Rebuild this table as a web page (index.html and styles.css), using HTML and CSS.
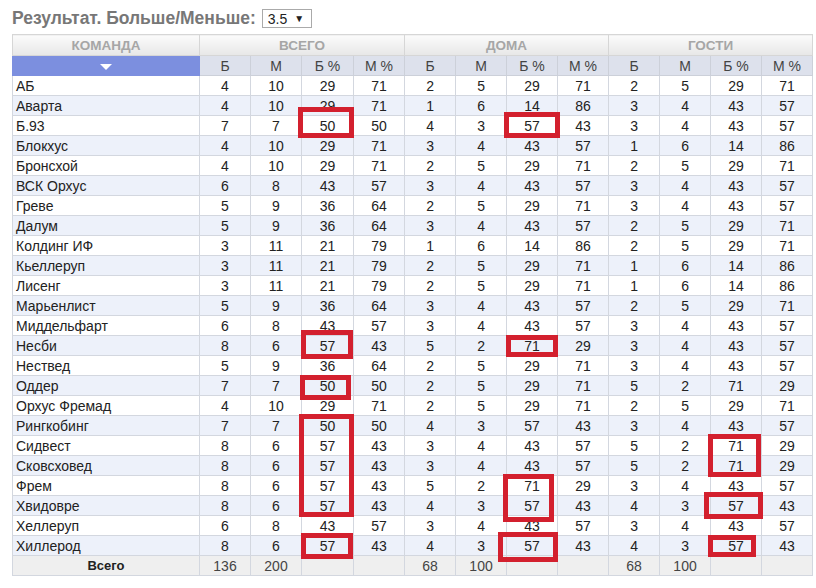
FILE: index.html
```html
<!DOCTYPE html>
<html lang="ru">
<head>
<meta charset="utf-8">
<title>Результат. Больше/Меньше</title>
<link rel="stylesheet" href="styles.css">
</head>
<body>
<div class="page">
  <div class="titlebar">
    <h1 class="title">Результат. Больше/Меньше:</h1>
    <div class="select"><span>3.5</span><span class="arrow">▼</span></div>
  </div>
  <table class="stats">
    <colgroup>
      <col class="c-team">
      <col class="c"><col class="c"><col class="c52"><col class="c">
      <col class="c"><col class="c"><col class="c"><col class="c">
      <col class="c"><col class="c"><col class="c"><col class="c">
    </colgroup>
    <thead>
      <tr class="h1">
        <th>КОМАНДА</th>
        <th colspan="4">ВСЕГО</th>
        <th colspan="4">ДОМА</th>
        <th colspan="4">ГОСТИ</th>
      </tr>
      <tr class="h2">
        <th class="sort"><span class="tri"></span></th>
        <th>Б</th><th>М</th><th>Б %</th><th>М %</th>
        <th>Б</th><th>М</th><th>Б %</th><th>М %</th>
        <th>Б</th><th>М</th><th>Б %</th><th>М %</th>
      </tr>
    </thead>
    <tbody>
      <tr><td>АБ</td><td>4</td><td>10</td><td>29</td><td>71</td><td>2</td><td>5</td><td>29</td><td>71</td><td>2</td><td>5</td><td>29</td><td>71</td></tr>
      <tr><td>Аварта</td><td>4</td><td>10</td><td>29</td><td>71</td><td>1</td><td>6</td><td>14</td><td>86</td><td>3</td><td>4</td><td>43</td><td>57</td></tr>
      <tr><td>Б.93</td><td>7</td><td>7</td><td>50</td><td>50</td><td>4</td><td>3</td><td>57</td><td>43</td><td>3</td><td>4</td><td>43</td><td>57</td></tr>
      <tr><td>Блокхус</td><td>4</td><td>10</td><td>29</td><td>71</td><td>3</td><td>4</td><td>43</td><td>57</td><td>1</td><td>6</td><td>14</td><td>86</td></tr>
      <tr><td>Бронсхой</td><td>4</td><td>10</td><td>29</td><td>71</td><td>2</td><td>5</td><td>29</td><td>71</td><td>2</td><td>5</td><td>29</td><td>71</td></tr>
      <tr><td>ВСК Орхус</td><td>6</td><td>8</td><td>43</td><td>57</td><td>3</td><td>4</td><td>43</td><td>57</td><td>3</td><td>4</td><td>43</td><td>57</td></tr>
      <tr><td>Греве</td><td>5</td><td>9</td><td>36</td><td>64</td><td>2</td><td>5</td><td>29</td><td>71</td><td>3</td><td>4</td><td>43</td><td>57</td></tr>
      <tr><td>Далум</td><td>5</td><td>9</td><td>36</td><td>64</td><td>3</td><td>4</td><td>43</td><td>57</td><td>2</td><td>5</td><td>29</td><td>71</td></tr>
      <tr><td>Колдинг ИФ</td><td>3</td><td>11</td><td>21</td><td>79</td><td>1</td><td>6</td><td>14</td><td>86</td><td>2</td><td>5</td><td>29</td><td>71</td></tr>
      <tr><td>Кьеллеруп</td><td>3</td><td>11</td><td>21</td><td>79</td><td>2</td><td>5</td><td>29</td><td>71</td><td>1</td><td>6</td><td>14</td><td>86</td></tr>
      <tr><td>Лисенг</td><td>3</td><td>11</td><td>21</td><td>79</td><td>2</td><td>5</td><td>29</td><td>71</td><td>1</td><td>6</td><td>14</td><td>86</td></tr>
      <tr><td>Марьенлист</td><td>5</td><td>9</td><td>36</td><td>64</td><td>3</td><td>4</td><td>43</td><td>57</td><td>2</td><td>5</td><td>29</td><td>71</td></tr>
      <tr><td>Миддельфарт</td><td>6</td><td>8</td><td>43</td><td>57</td><td>3</td><td>4</td><td>43</td><td>57</td><td>3</td><td>4</td><td>43</td><td>57</td></tr>
      <tr><td>Несби</td><td>8</td><td>6</td><td>57</td><td>43</td><td>5</td><td>2</td><td>71</td><td>29</td><td>3</td><td>4</td><td>43</td><td>57</td></tr>
      <tr><td>Нествед</td><td>5</td><td>9</td><td>36</td><td>64</td><td>2</td><td>5</td><td>29</td><td>71</td><td>3</td><td>4</td><td>43</td><td>57</td></tr>
      <tr><td>Оддер</td><td>7</td><td>7</td><td>50</td><td>50</td><td>2</td><td>5</td><td>29</td><td>71</td><td>5</td><td>2</td><td>71</td><td>29</td></tr>
      <tr><td>Орхус Фремад</td><td>4</td><td>10</td><td>29</td><td>71</td><td>2</td><td>5</td><td>29</td><td>71</td><td>2</td><td>5</td><td>29</td><td>71</td></tr>
      <tr><td>Рингкобинг</td><td>7</td><td>7</td><td>50</td><td>50</td><td>4</td><td>3</td><td>57</td><td>43</td><td>3</td><td>4</td><td>43</td><td>57</td></tr>
      <tr><td>Сидвест</td><td>8</td><td>6</td><td>57</td><td>43</td><td>3</td><td>4</td><td>43</td><td>57</td><td>5</td><td>2</td><td>71</td><td>29</td></tr>
      <tr><td>Сковсховед</td><td>8</td><td>6</td><td>57</td><td>43</td><td>3</td><td>4</td><td>43</td><td>57</td><td>5</td><td>2</td><td>71</td><td>29</td></tr>
      <tr><td>Фрем</td><td>8</td><td>6</td><td>57</td><td>43</td><td>5</td><td>2</td><td>71</td><td>29</td><td>3</td><td>4</td><td>43</td><td>57</td></tr>
      <tr><td>Хвидовре</td><td>8</td><td>6</td><td>57</td><td>43</td><td>4</td><td>3</td><td>57</td><td>43</td><td>4</td><td>3</td><td>57</td><td>43</td></tr>
      <tr><td>Хеллеруп</td><td>6</td><td>8</td><td>43</td><td>57</td><td>3</td><td>4</td><td>43</td><td>57</td><td>3</td><td>4</td><td>43</td><td>57</td></tr>
      <tr><td>Хиллерод</td><td>8</td><td>6</td><td>57</td><td>43</td><td>4</td><td>3</td><td>57</td><td>43</td><td>4</td><td>3</td><td>57</td><td>43</td></tr>
    </tbody>
    <tfoot>
      <tr><td class="total">Всего</td><td>136</td><td>200</td><td></td><td></td><td>68</td><td>100</td><td></td><td></td><td>68</td><td>100</td><td></td><td></td></tr>
    </tfoot>
  </table>

  <div class="mark" style="left:298px;top:107px;width:56px;height:31px"></div>
  <div class="mark" style="left:504px;top:112px;width:56px;height:26px"></div>
  <div class="mark" style="left:301px;top:330px;width:52px;height:29px"></div>
  <div class="mark" style="left:506px;top:335px;width:52px;height:22px"></div>
  <div class="mark" style="left:300px;top:375px;width:51px;height:25px"></div>
  <div class="mark" style="left:299px;top:414px;width:55px;height:103px"></div>
  <div class="mark" style="left:503px;top:474px;width:51px;height:48px"></div>
  <div class="mark" style="left:708px;top:434px;width:53px;height:43px"></div>
  <div class="mark" style="left:704px;top:492px;width:59px;height:27px"></div>
  <div class="mark" style="left:301px;top:533px;width:52px;height:26px"></div>
  <div class="mark" style="left:498px;top:532px;width:60px;height:30px"></div>
  <div class="mark" style="left:708px;top:535px;width:48px;height:22px"></div>
</div>
</body>
</html>
```

FILE: styles.css
```css
* { box-sizing: border-box; }
html, body { margin: 0; padding: 0; background: #fff; }
body { font-family: "Liberation Sans", Arial, sans-serif; color: #222; }

.page {
  position: relative;
  padding: 9px 4px 0 12px;
}

.titlebar {
  display: flex;
  align-items: center;
  gap: 6px;
  height: 19px;
}
.title {
  margin: 0;
  font-size: 17.5px;
  font-weight: bold;
  color: #777;
  line-height: 19px;
}
.select {
  display: flex;
  align-items: center;
  gap: 7px;
  width: 50px;
  height: 19px;
  padding: 0 0 0 5px;
  border: 1px solid #aaa;
  background: #fff;
  font-size: 14px;
  color: #222;
}
.select .arrow { font-size: 10px; }

.stats {
  margin-top: 6px;
  border-collapse: collapse;
  table-layout: fixed;
  width: 800px;
  font-size: 14px;
  border: 1px solid #d2d2d2;
}
.c-team { width: 187px; }
.c { width: 51px; }
.c52 { width: 52px; }

.stats th, .stats td {
  padding: 0;
  border: 1px solid #d3d7df;
  text-align: center;
  white-space: nowrap;
  overflow: hidden;
}

.h1 th {
  height: 21px;
  font-size: 13.5px;
  font-weight: bold;
  color: #a6a6a6;
  background: linear-gradient(#fbfbfb, #e7e7e7);
  border-color: #d6d6d6;
}
.h2 th {
  height: 20px;
  font-weight: normal;
  color: #444;
  background: #dde1ec;
  border-color: #ccd0d9;
}
.h2 th.sort {
  background: #7c8fdf;
  border-color: #7c8fdf;
}
.tri {
  display: inline-block;
  width: 0; height: 0;
  border-left: 6px solid transparent;
  border-right: 6px solid transparent;
  border-top: 6px solid #fff;
  vertical-align: middle;
}

.stats tbody td {
  height: 20px;
  color: #222;
}
.stats tbody td:first-child {
  text-align: left;
  padding-left: 3px;
}
.stats tbody tr:nth-child(even) td { background: #edf1fa; }
.stats tbody tr:nth-child(odd) td { background: #fff; }

.stats tfoot td {
  height: 20px;
  background: #efefef;
  color: #444;
}
.stats tfoot td.total {
  font-weight: bold;
  font-size: 13px;
  color: #222;
}

.mark {
  position: absolute;
  border: 5px solid #d3202e;
  pointer-events: none;
}
```
